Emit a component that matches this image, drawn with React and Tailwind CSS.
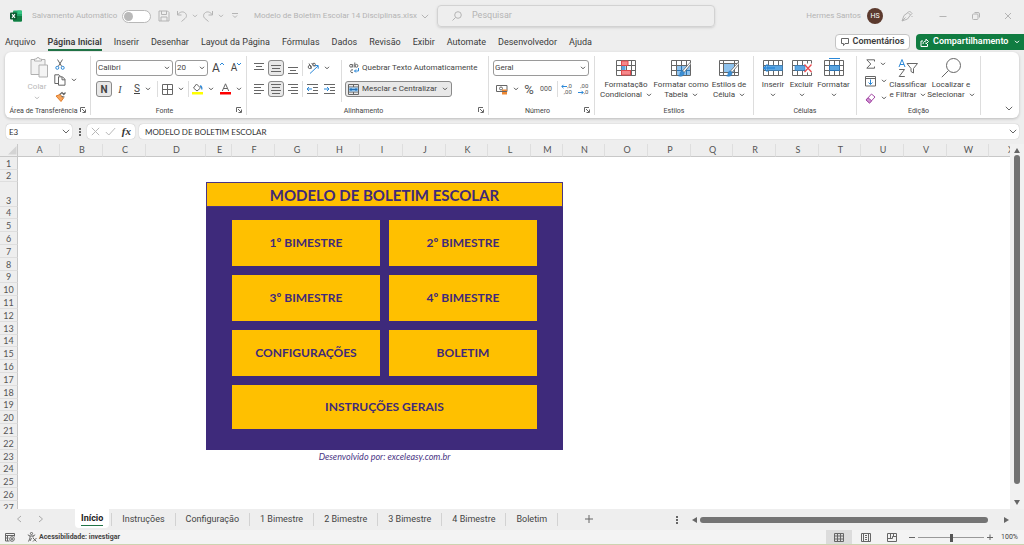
import React from "react";

function Svg({ w, h, children, className = "" }) {
  return (
    <svg width={w} height={h} viewBox={`0 0 ${w} ${h}`} fill="none" className={`shrink-0 ${className}`} aria-hidden="true">
      {children}
    </svg>
  );
}

function Chevron({ className = "text-[#555555]" }) {
  return (
    <Svg w={6} h={4} className={className}>
      <path d="M1 .8L3 2.8L5 .8" stroke="currentColor" />
    </Svg>
  );
}

function WideChevron({ className = "text-[#666666]" }) {
  return (
    <Svg w={8} h={5} className={className}>
      <path d="M.8 .8L4 4L7.2 .8" stroke="currentColor" />
    </Svg>
  );
}

const GRAY = "#666666";
const BLUE = "#2b88d8";

/* ---------- Title bar ---------- */

function TitleBar() {
  return (
    <header className="flex h-8 shrink-0 items-center text-[8px] text-[#b4b4b4]">
      <div className="flex w-[437px] shrink-0 items-center pl-2.5">
        <Svg w={12} h={12}>
          <rect x="3" y="0.5" width="9" height="11" rx="1" fill="#21a366" />
          <path d="M3 6h9v4.500a1 1 0 0 1-1 1H4a1 1 0 0 1-1-1z" fill="#107c41" />
          <path d="M7.500 .5H11a1 1 0 0 1 1 1V4H7.500z" fill="#33c481" />
          <rect x="0" y="2.500" width="7" height="7" rx="1" fill="#0b5a2f" />
          <path d="M2 4.200L5 7.900M5 4.200L2 7.900" stroke="#fff" strokeWidth="1.100" />
        </Svg>
        <label htmlFor="autosave" className="ml-2.5 w-[90px] whitespace-nowrap">Salvamento Automático</label>
        <span className="relative flex h-[13px] w-[29px] items-center">
          <input id="autosave" type="checkbox" role="switch" className="peer h-[13px] w-[29px] appearance-none rounded-full border border-[#b8b8b8] bg-white" />
          <span className="pointer-events-none absolute left-0.5 size-[9px] rounded-full bg-[#b9b9b9]" />
        </span>
        <button aria-label="Salvar" className="ml-[7px]">
          <Svg w={12} h={12}>
            <path d="M1 1h8.500L11 2.500V11H1zM3.500 1v3.500h5V1M3 11V7h6v4" stroke="#b4b4b4" />
          </Svg>
        </button>
        <button aria-label="Desfazer" className="ml-1.5 flex items-center gap-1">
          <Svg w={12} h={12}>
            <path d="M1.500 1v4h4M1.500 5C3 2.500 6 1 8.500 2.500C11 4 11 7 9 8.500L5.500 11.500" stroke="#b4b4b4" />
          </Svg>
          <Chevron className="text-[#b4b4b4]" />
        </button>
        <button aria-label="Refazer" className="ml-1 flex items-center gap-1">
          <Svg w={12} h={12}>
            <path d="M10.500 1v4h-4M10.500 5C9 2.500 6 1 3.500 2.500C1 4 1 7 3 8.500L6.500 11.500" stroke="#b4b4b4" />
          </Svg>
          <Chevron className="text-[#b4b4b4]" />
        </button>
        <button aria-label="Personalizar acesso rápido" className="ml-2">
          <Svg w={6} h={6}>
            <path d="M0 .5h6M1 2.500L3 4.500L5 2.500" stroke="#b4b4b4" />
          </Svg>
        </button>
        <button className="ml-4 flex items-center gap-1 whitespace-nowrap">
          Modelo de Boletim Escolar 14 Disciplinas.xlsx
          <WideChevron className="text-[#b4b4b4]" />
        </button>
      </div>
      <label className="flex h-[22px] min-w-0 flex-1 items-center gap-2.5 rounded border border-[#d2d2d2] px-3.5 shadow-sm">
        <Svg w={10} h={10}>
          <circle cx="6" cy="4" r="3.300" stroke="#b4b4b4" />
          <path d="M3.500 6.500L.5 9.500" stroke="#b4b4b4" />
        </Svg>
        <input aria-label="Pesquisar" placeholder="Pesquisar" className="min-w-0 flex-1 bg-transparent text-[9px] outline-none placeholder:text-[#b4b4b4]" />
      </label>
      <div className="flex w-[309px] shrink-0 items-center justify-end pr-3">
        <span>Hermes Santos</span>
        <span className="mr-[18px] ml-1.5 flex size-4 items-center justify-center rounded-full bg-[#5c3a2e] text-[7px] text-white">HS</span>
        <button aria-label="Caneta" className="mr-[26px]">
          <Svg w={12} h={12}>
            <path d="M1 11L3 5.500L7 2.500L9.500 5L6.500 9zM1 11l3.500-3.500M7 2.500l1.500-1.500L11 3.500L9.500 5M11 6v1" stroke="#b4b4b4" />
          </Svg>
        </button>
        <button aria-label="Minimizar" className="mr-[25px]">
          <Svg w={8} h={8}><path d="M.5 4.500h7" stroke="#b4b4b4" /></Svg>
        </button>
        <button aria-label="Restaurar" className="mr-6">
          <Svg w={8} h={8}>
            <rect x=".5" y="2" width="5.500" height="5.500" rx="1" stroke="#b4b4b4" />
            <path d="M2.500 .5H6A1.500 1.500 0 0 1 7.500 2V5.500" stroke="#b4b4b4" />
          </Svg>
        </button>
        <button aria-label="Fechar">
          <Svg w={8} h={8}><path d="M1 1l6 6M7 1L1 7" stroke="#b4b4b4" /></Svg>
        </button>
      </div>
    </header>
  );
}

/* ---------- Ribbon tabs ---------- */

const TABS = ["Arquivo", "Página Inicial", "Inserir", "Desenhar", "Layout da Página", "Fórmulas", "Dados", "Revisão", "Exibir", "Automate", "Desenvolvedor", "Ajuda"];

function RibbonTabs() {
  return (
    <nav className="flex h-5 shrink-0 items-center pl-[5px] text-[9px] text-[#3b3b3b]">
      <div className="flex flex-1 gap-3">
        {TABS.map((t) => (
          <button
            key={t}
            className={t === "Página Inicial"
              ? "border-b-2 border-[#217346] pt-0.5 leading-[13px] font-semibold whitespace-nowrap"
              : "border-b-2 border-transparent pt-0.5 leading-[13px] whitespace-nowrap"}
          >
            {t}
          </button>
        ))}
      </div>
      <button className="mr-1.5 flex h-4 w-[75px] items-center justify-center gap-1 rounded-sm border border-[#c4c4c4] bg-white font-semibold">
        <Svg w={8} h={8}><path d="M.5 .5h7v5H4L2.500 7.500V5.500H.5z" stroke={GRAY} /></Svg>
        Comentários
      </button>
      <button className="flex h-4 w-[108px] items-center gap-1 rounded-l-sm bg-[#107c41] pl-1 font-semibold text-white">
        <Svg w={9} h={9}>
          <path d="M3 3H1v5.500h6.500V6M3 6C3 4 4.500 3 6 3V1l2.500 2.500L6 6V4.500" stroke="#fff" />
        </Svg>
        <span className="flex-1 text-left">Compartilhamento</span>
        <Chevron className="mr-1 text-white" />
      </button>
    </nav>
  );
}

/* ---------- Ribbon ---------- */

function Launcher() {
  return (
    <button aria-label="Mais opções" className="absolute right-1 bottom-0.5">
      <Svg w={6} h={6}>
        <path d="M.5 5V.5H5M2 2l3 3M5.500 2.500v3h-3" stroke={GRAY} />
      </Svg>
    </button>
  );
}

function Group({ label, className, launcher, children }) {
  return (
    <section className={`relative flex shrink-0 flex-col border-r border-[#dddddd] ${className}`}>
      <div className="flex h-[51px] items-start">{children}</div>
      <div className={launcher
        ? "flex flex-1 items-end justify-center pr-2 text-[7px] leading-[8px] whitespace-nowrap text-[#444444]"
        : "flex flex-1 items-end justify-center text-[7px] leading-[8px] whitespace-nowrap text-[#444444]"}>{label}</div>
      {launcher && <Launcher />}
    </section>
  );
}

function IconButton({ label, active, chevron, className = "", children }) {
  return (
    <button
      aria-label={label}
      className={active
        ? "flex h-4 w-4 shrink-0 items-center justify-center rounded-[3px] border border-[#8a8a8a] bg-[#e8e8e8]"
        : `flex h-4 shrink-0 items-center justify-center gap-[5px] ${className}`}
    >
      {children}
      {chevron && <Chevron />}
    </button>
  );
}

function Lines({ widths, start = 0, align = "center" }) {
  return (
    <Svg w={10} h={11}>
      {widths.map((w, i) => {
        const x = align === "left" ? 0 : align === "right" ? 10 - w : (10 - w) / 2;
        const y = start + i * 3 + 0.5;
        return <path key={i} d={`M${x} ${y}h${w}`} stroke={GRAY} />;
      })}
    </Svg>
  );
}

function Indent({ right }) {
  return (
    <Svg w={11} h={11}>
      <path d="M0 .5h11M6 3.500h5M6 6.500h5M0 9.500h11" stroke={GRAY} />
      <path d={right ? "M0 5h5M3 3l2 2l-2 2" : "M5 5H0M2 3L0 5l2 2"} stroke={BLUE} />
    </Svg>
  );
}

function BigButton({ lines, icon, className = "" }) {
  return (
    <button className={`flex shrink-0 flex-col items-center text-[8px] leading-[10px] whitespace-nowrap text-[#444444] ${className}`}>
      <span className="flex h-6 items-center">{icon}</span>
      {lines.map((l, i) => (
        <span key={i} className="flex h-[10px] items-center gap-1">
          {l}
          {i === lines.length - 1 && <Chevron />}
        </span>
      ))}
    </button>
  );
}

function SelectBox({ label, value, className }) {
  return (
    <span className={`relative flex h-4 items-center ${className}`}>
      <select aria-label={label} defaultValue={value} className="h-4 w-full appearance-none rounded-[3px] border border-[#9a9a9a] bg-white pl-px text-[8px] text-[#444444]">
        <option>{value}</option>
      </select>
      <span className="pointer-events-none absolute right-[3px] flex"><Chevron /></span>
    </span>
  );
}

function GridIcon({ children }) {
  return (
    <Svg w={20} h={20}>
      <path d="M.5 2.500h19v15H.5zM.5 7.500h19M.5 12.500h19M5.500 2.500v15M10.500 2.500v15M15.500 2.500v15" stroke={GRAY} />
      {children}
    </Svg>
  );
}

function Brush() {
  return (
    <>
      <path d="M19.500 4L11.500 13l1.500 1.500L20 6z" fill="#fff" stroke={GRAY} strokeWidth=".8" />
      <path d="M11.500 13c-2 0-2.500 1.500-2.500 3c0 1-1 1.500-2 1.500c2 1.500 6.500 1 6-3z" fill="#3a8ed4" stroke="#2b75b5" strokeWidth=".6" />
    </>
  );
}

function Divider() {
  return <span className="h-4 w-px shrink-0 bg-[#dddddd]" />;
}

function Ribbon() {
  return (
    <div className="mr-[5px] ml-[5px] flex h-[66px] shrink-0 rounded-md bg-white pt-1 pb-[3px] shadow-[0_1px_3px_rgba(0,0,0,0.22)]">
      <Group label="Área de Transferência" className="w-[86px]" launcher>
        <button className="ml-5 flex w-[24px] flex-col items-center text-[8px] leading-[10px] text-[#b8b8b8]">
          <Svg w={20} h={22} className="mb-1 ml-1">
            <path d="M2 3.500h14v15H2z" fill="#f2f2f2" stroke="#b0b0b0" />
            <path d="M5.500 5V3H7.500a1.500 1.500 0 0 1 3 0H12.500V5z" fill="#fff" stroke="#b0b0b0" />
            <path d="M10 9h8.500v12H10z" fill="#f4f4f4" stroke="#b0b0b0" />
          </Svg>
          Colar
          <Chevron className="mt-1 text-[#b8b8b8]" />
        </button>
        <div className="ml-[3px] flex flex-col items-start">
          <IconButton label="Recortar" className="w-4">
            <Svg w={10} h={11}>
              <path d="M2.500 .5L6.800 7.500M7.500 .5L3.200 7.500" stroke={GRAY} />
              <circle cx="2.300" cy="8.800" r="1.500" stroke={BLUE} />
              <circle cx="7.700" cy="8.800" r="1.500" stroke={BLUE} />
            </Svg>
          </IconButton>
          <IconButton label="Copiar" chevron className="pl-0.5">
            <Svg w={12} h={12}>
              <path d="M4 9.500H.8V.8H5L6.500 2.300M4.500 2.800h4L11 5.300V11.200H4.500zM8 3v2.800h3" stroke={GRAY} />
            </Svg>
          </IconButton>
          <IconButton label="Pincel de formatação" className="w-4">
            <Svg w={11} h={11}>
              <path d="M1 5l5 5.500L8.500 7L5 3.500z" fill="#f6a55c" stroke="#e07b28" />
              <path d="M4.800 3.500L7 1.500L8.800 3.500L10.500 1.500M6.500 5.500L9.500 6" stroke={GRAY} strokeWidth="1.200" />
            </Svg>
          </IconButton>
        </div>
      </Group>

      <Group label="Fonte" className="w-[156px]" launcher>
        <div className="flex flex-col gap-[5px] pt-1 pl-[5px]">
          <div className="flex items-center">
            <SelectBox label="Fonte" value="Calibri" className="mr-0.5 w-[77px]" />
            <SelectBox label="Tamanho da fonte" value="20" className="w-[33px]" />
            <IconButton label="Aumentar fonte" className="ml-1 text-[12px] text-[#444444]">
              <span className="flex items-start leading-[12px]">A<Svg w={4} h={4}><path d="M0 3L2 1l2 2" stroke={BLUE} /></Svg></span>
            </IconButton>
            <IconButton label="Diminuir fonte" className="ml-[7px] text-[10px] text-[#444444]">
              <span className="flex items-start leading-[12px]">A<Svg w={4} h={4}><path d="M0 1L2 3l2-2" stroke={BLUE} /></Svg></span>
            </IconButton>
          </div>
          <div className="flex items-center text-[#444444]">
            <IconButton label="Negrito" active><b className="text-[10px]">N</b></IconButton>
            <IconButton label="Itálico" className="w-4"><i className="font-['Liberation_Serif',serif] text-[10px]">I</i></IconButton>
            <IconButton label="Sublinhado" chevron className="ml-1.5 gap-2"><u className="text-[10px] leading-[12px]">S</u></IconButton>
            <span className="mr-1 ml-1.5 flex"><Divider /></span>
            <IconButton label="Bordas" chevron>
              <Svg w={11} h={11}><path d="M.5 .5h10v10H.5zM5.500 .5v10M.5 5.500h10" stroke={GRAY} /></Svg>
            </IconButton>
            <span className="mr-[3px] ml-1 flex"><Divider /></span>
            <IconButton label="Cor de preenchimento" chevron>
              <Svg w={11} h={12}>
                <path d="M4.500 1L8.500 5L5 8L1.500 5z" stroke={GRAY} />
                <path d="M8 3c1.500 0 2 1.500 1.800 3.500" stroke={BLUE} strokeWidth="1.300" />
                <path d="M0 9h11v2.500H0z" fill="#ffff00" />
              </Svg>
            </IconButton>
            <IconButton label="Cor da fonte" chevron className="ml-1.5">
              <Svg w={11} h={12}>
                <path d="M2.300 8L5.500 .8L8.700 8M3.500 5.500h4" stroke={GRAY} />
                <path d="M0 9h11v2.500H0z" fill="#ff0000" />
              </Svg>
            </IconButton>
          </div>
        </div>
      </Group>

      <Group label="Alinhamento" className="w-[242px]" launcher>
        <div className="flex w-[94px] shrink-0 flex-col gap-[5px] pt-1 pl-1">
          <div className="flex items-center gap-px">
            <IconButton label="Alinhar acima" className="w-4"><Lines widths={[10, 6, 10]} /></IconButton>
            <IconButton label="Alinhar no meio" active><Lines widths={[10, 8, 10]} start={2} /></IconButton>
            <IconButton label="Alinhar embaixo" className="w-4"><Lines widths={[10, 6, 10]} start={4} /></IconButton>
            <Divider />
            <IconButton label="Orientação" chevron className="ml-[3px] gap-1">
              <Svg w={12} h={12}>
                <circle cx="2.800" cy="5" r="1.600" stroke={GRAY} />
                <path d="M4.500 6.500L2 1.500M4.500 1l3.500 3.500" stroke={GRAY} />
                <circle cx="7" cy="2.600" r="1.400" stroke={GRAY} />
                <path d="M3 11.500L11 4M8 3.500h3.200v3.200" stroke={BLUE} />
              </Svg>
            </IconButton>
          </div>
          <div className="flex items-center gap-px">
            <IconButton label="Alinhar à esquerda" className="w-4"><Lines widths={[10, 7, 10, 7]} align="left" /></IconButton>
            <IconButton label="Centralizar" active><Lines widths={[10, 8, 10, 8]} /></IconButton>
            <IconButton label="Alinhar à direita" className="w-4"><Lines widths={[10, 7, 10, 7]} align="right" /></IconButton>
            <Divider />
            <IconButton label="Diminuir recuo" className="w-4"><Indent /></IconButton>
            <IconButton label="Aumentar recuo" className="w-4"><Indent right /></IconButton>
          </div>
        </div>
        <div className="mt-1 flex h-[42px] shrink-0 flex-col gap-[5px] border-l border-[#dddddd] pl-[3px] text-[8px] whitespace-nowrap text-[#444444]">
          <button className="flex h-4 items-center gap-[3px] pl-1">
            <Svg w={10} h={12}>
              <circle cx="2" cy="3.800" r="1.400" stroke={GRAY} />
              <path d="M3.800 2v3.500M5.800 .5v5M4 8a1.500 1.500 0 1 0 0 2.500" stroke={GRAY} />
              <circle cx="7.500" cy="3.800" r="1.400" stroke={GRAY} />
              <path d="M9.500 6v3H5.500M7 7.500L5.500 9L7 10.500" stroke={BLUE} />
            </Svg>
            Quebrar Texto Automaticamente
          </button>
          <button className="flex h-4 w-[107px] items-center gap-[3px] rounded-[3px] border border-[#8a8a8a] bg-[#e8e8e8] pl-0.5">
            <Svg w={11} h={11}>
              <path d="M.5 .5h10v10H.5zM.5 3h10M.5 8h10M5.500 .5V3M5.500 8v2.500" stroke={GRAY} />
              <path d="M1 3.500h9v4H1z" fill="#8fc3ee" />
              <path d="M2 5.500h7M3.500 4L2 5.500L3.500 7M7.500 4L9 5.500L7.500 7" stroke="#1f6fb8" />
            </Svg>
            <span className="flex-1 text-left">Mesclar e Centralizar</span>
            <span className="mr-[3px] flex"><Chevron /></span>
          </button>
        </div>
      </Group>

      <Group label="Número" className="w-[106px]" launcher>
        <div className="flex flex-col gap-[5px] pt-1 pl-1">
          <SelectBox label="Formato de número" value="Geral" className="w-24" />
          <div className="flex items-center text-[#555555]">
            <IconButton label="Formato de contabilização" chevron className="ml-[3px]">
              <Svg w={12} h={11}>
                <path d="M.5 1.500h10.500v6H.5z" stroke={GRAY} />
                <circle cx="5" cy="4.500" r="1.500" stroke={GRAY} />
                <path d="M6 5.500h5v1.500H6zM6 8h5v2.500H6z" fill="#ed8733" />
              </Svg>
            </IconButton>
            <IconButton label="Porcentagem" className="ml-1 w-3 text-[13px] leading-none">%</IconButton>
            <IconButton label="Separador de milhares" className="w-[22px] text-[7px]">000</IconButton>
            <Divider />
            <IconButton label="Aumentar casas decimais" className="w-[17px]">
              <span className="flex flex-col text-right text-[6px] leading-[6px]">
                <span className="flex items-center"><Svg w={6} h={5}><path d="M6 2.500H.8M2.500 .8L.8 2.500L2.500 4.200" stroke={BLUE} /></Svg>,0</span>
                <span>,00</span>
              </span>
            </IconButton>
            <IconButton label="Diminuir casas decimais" className="w-4">
              <span className="flex flex-col text-right text-[6px] leading-[6px]">
                <span>,00</span>
                <span className="flex items-center"><Svg w={6} h={5}><path d="M0 2.500h5.200M3.500 .8l1.700 1.700L3.500 4.200" stroke={BLUE} /></Svg>,0</span>
              </span>
            </IconButton>
          </div>
        </div>
      </Group>

      <Group label="Estilos" className="w-[159px]">
        <BigButton
          className="ml-[5px] w-[52px]"
          lines={["Formatação", "Condicional"]}
          icon={
            <GridIcon>
              <path d="M5.500 3h6.500v4.500H5.500zM5.500 12.500h9V17h-9z" fill="#f4888b" stroke="#e0484d" />
              <path d="M5.500 8h4v4h-4z" fill="#5ba6e2" />
            </GridIcon>
          }
        />
        <BigButton
          className="w-[58px]"
          lines={["Formatar como", "Tabela"]}
          icon={
            <GridIcon>
              <path d="M6 8h13v9H6z" fill="#8fc3ee" />
              <path d="M6 12.500h13M10.500 8v9M15.500 8v9" stroke="#2b75b5" />
              <Brush />
            </GridIcon>
          }
        />
        <BigButton
          className="w-[38px]"
          lines={["Estilos de", "Célula"]}
          icon={
            <Svg w={20} h={20}>
              <path d="M.5 2.500h19v15H.5zM.5 5.500h19M.5 14.500h19M4.500 2.500v15M15.500 2.500v15" stroke={GRAY} />
              <path d="M5 6h10v8H5z" fill="#8fc3ee" />
              <Brush />
            </Svg>
          }
        />
      </Group>

      <Group label="Células" className="w-[103px]">
        <BigButton
          className="ml-[5px] w-7"
          lines={["Inserir", ""]}
          icon={
            <GridIcon>
              <path d="M4 7.500h15.500v5H4z" fill="#5ba6e2" stroke="#2b75b5" strokeWidth=".6" />
              <path d="M12 10H.8M4.500 6.500L.8 10l3.700 3.500" stroke={BLUE} strokeWidth="1.300" />
            </GridIcon>
          }
        />
        <BigButton
          className="w-[29px]"
          lines={["Excluir", ""]}
          icon={
            <GridIcon>
              <path d="M13 5.500h7v9h-7z" fill="#fff" />
              <path d="M3 7.500h10v5H3z" fill="#5ba6e2" stroke="#2b75b5" strokeWidth=".6" />
              <path d="M12.500 6.500l7 7.500M19.500 6.500l-7 7.500" stroke="#e8484d" strokeWidth="1.300" />
            </GridIcon>
          }
        />
        <BigButton
          className="w-[35px]"
          lines={["Formatar", ""]}
          icon={
            <GridIcon>
              <path d="M5.500 7.500h10v5h-10z" fill="#5ba6e2" stroke="#2b75b5" />
              <path d="M5 .5h11" stroke={BLUE} />
            </GridIcon>
          }
        />
      </Group>

      <Group label="Edição" className="w-[124px]">
        <div className="ml-2 flex w-[21px] shrink-0 flex-col gap-px">
          <IconButton label="AutoSoma" chevron>
            <Svg w={9} h={10}><path d="M8.500 2.500V.8H.8L4.800 5L.8 9.200H8.500V7.500" stroke={GRAY} /></Svg>
          </IconButton>
          <IconButton label="Preencher" chevron className="gap-1">
            <Svg w={11} h={11}>
              <path d="M.5 .5h10v9.500H.5zM.5 2.500h10" stroke={GRAY} />
              <path d="M5.500 3.500v5M3.500 6.500l2 2l2-2" stroke={BLUE} />
            </Svg>
          </IconButton>
          <IconButton label="Limpar" chevron className="gap-1">
            <Svg w={11} h={11}>
              <path d="M1 7L6.500 1L10 4L4.500 10z" fill="#fff" stroke="#a349a4" />
              <path d="M1 7L3 4.800L6.800 7.800L4.500 10z" fill="#cf8fd2" stroke="#a349a4" />
            </Svg>
          </IconButton>
        </div>
        <BigButton
          className="ml-[3px] w-[38px]"
          lines={["Classificar", "e Filtrar"]}
          icon={
            <Svg w={20} h={20}>
              <path d="M1 9L4 1.500L7 9M2 6.500h4" stroke={BLUE} />
              <path d="M1.200 11.500H6.500L1.200 18.500H6.800" stroke={GRAY} />
              <path d="M9 5.500h10.500L15.500 10.500V15L13 13.500V10.500z" stroke={GRAY} />
            </Svg>
          }
        />
        <BigButton
          className="w-[48px]"
          lines={["Localizar e", "Selecionar"]}
          icon={
            <Svg w={20} h={20}>
              <circle cx="12.500" cy="7.500" r="7" stroke={GRAY} />
              <path d="M7.500 12.500L.8 19.200" stroke={GRAY} />
            </Svg>
          }
        />
      </Group>

      <div className="flex flex-1 items-end justify-end pr-1.5 pb-1">
        <button aria-label="Recolher faixa de opções"><WideChevron /></button>
      </div>
    </div>
  );
}

/* ---------- Formula bar ---------- */

function FormulaBar() {
  return (
    <div className="mt-1.5 mr-[5px] ml-1.5 flex h-[15px] shrink-0 items-stretch font-[Lato,sans-serif] text-[8px] text-[#333333]">
      <label className="flex w-[66px] items-center rounded-sm bg-white pr-0.5 pl-[3px] shadow-[0_0_1px_rgba(0,0,0,0.35)]">
        <input aria-label="Caixa de nome" defaultValue="E3" className="w-0 min-w-0 flex-1 outline-none" />
        <WideChevron />
      </label>
      <span className="flex w-[15px] items-center justify-center">
        <Svg w={2} h={8}><path d="M0 0h2v2H0zM0 3h2v2H0zM0 6h2v2H0z" fill="#666666" /></Svg>
      </span>
      <div className="flex w-12 items-center justify-between rounded-sm bg-white px-1 shadow-[0_0_1px_rgba(0,0,0,0.35)]">
        <button aria-label="Cancelar"><Svg w={9} h={9}><path d="M.8 .8l7.400 7.400M8.200 .8L.8 8.200" stroke="#b8b8b8" /></Svg></button>
        <button aria-label="Inserir"><Svg w={11} h={9}><path d="M.8 5l3 3L10.200 1" stroke="#b8b8b8" /></Svg></button>
        <button aria-label="Inserir função" className="font-['Liberation_Serif',serif] text-[11px] leading-none font-bold italic">fx</button>
      </div>
      <label className="ml-1 flex min-w-0 flex-1 items-center rounded-sm bg-white pr-0.5 pl-1.5 shadow-[0_0_1px_rgba(0,0,0,0.35)]">
        <input aria-label="Barra de fórmulas" defaultValue="MODELO DE BOLETIM ESCOLAR" className="min-w-0 flex-1 outline-none" />
        <WideChevron />
      </label>
    </div>
  );
}

/* ---------- Sheet ---------- */

const COLUMNS = [
  ["A", 42], ["B", 43], ["C", 43], ["D", 60], ["E", 26], ["F", 43], ["G", 43], ["H", 42],
  ["I", 43], ["J", 43], ["K", 42], ["L", 43], ["M", 32], ["N", 42], ["O", 43], ["P", 43],
  ["Q", 42], ["R", 43], ["S", 43], ["T", 42], ["U", 43], ["V", 43], ["W", 42], ["X", 43],
];

const ROWS = Array.from({ length: 27 }, (_, i) => {
  const n = i + 1;
  if (n === 2) return [n, 12];
  if (n === 3) return [n, 25];
  if (n > 3 && (n - 4) % 5 === 0) return [n, 12];
  return [n, 13];
});

const SHEET_WIDTH = 18 + COLUMNS.reduce((sum, c) => sum + c[1], 0);

const MENU = ["1º BIMESTRE", "2º BIMESTRE", "3º BIMESTRE", "4º BIMESTRE", "CONFIGURAÇÕES", "BOLETIM"];

function MenuPanel() {
  const item = "flex items-center justify-center bg-[#ffc000] text-[12px] font-bold text-[#3f2a7a]";
  return (
    <div className="grid grid-cols-2 gap-[9px] px-[26px] pt-[13px]">
      {MENU.map((m) => (
        <button key={m} className={`h-[46px] ${item}`}>{m}</button>
      ))}
      <button className={`col-span-2 h-11 ${item}`}>INSTRUÇÕES GERAIS</button>
    </div>
  );
}

function Sheet() {
  return (
    <div className="mt-[5px] flex min-h-0 flex-1">
      <div className="min-w-0 flex-1 overflow-hidden bg-white">
        <table className="table-fixed border-separate border-spacing-0 font-[Lato,sans-serif] text-[9px] leading-[10px]" style={{ width: SHEET_WIDTH }}>
          <colgroup>
            <col style={{ width: 18 }} />
            {COLUMNS.map(([name, w]) => <col key={name} style={{ width: w }} />)}
          </colgroup>
          <thead>
            <tr style={{ height: 13 }}>
              <th className="border-r border-b border-[#c8c8c8] bg-[#eeeeee] p-0" aria-label="Selecionar tudo">
                <Svg w={9} h={9} className="ml-auto"><path d="M8.500 0v8.500H0z" fill="#d4d4d4" /></Svg>
              </th>
              {COLUMNS.map(([name]) => (
                <th key={name} scope="col" className="border-r border-b border-r-[#dedede] border-b-[#c8c8c8] bg-[#eeeeee] p-0 pl-0.5 font-normal text-[#555555]">{name}</th>
              ))}
            </tr>
          </thead>
          <tbody>
            {ROWS.map(([n, h]) => (
              <tr key={n} style={{ height: h }}>
                <th scope="row" className="border-r border-b border-r-[#c8c8c8] border-b-[#dedede] bg-[#eeeeee] p-0 align-bottom font-normal text-[#555555]">{n}</th>
                <td colSpan={4} className="p-0" />
                {n === 3 && (
                  <td colSpan={9} className="border border-[#4a3584] bg-[#ffc000] p-0 text-center text-[15px] leading-[18px] font-bold text-[#3f2a7a]">
                    MODELO DE BOLETIM ESCOLAR
                  </td>
                )}
                {n === 4 && (
                  <td colSpan={9} rowSpan={19} className="bg-[#3e2a7b] p-0 align-top"><MenuPanel /></td>
                )}
                {n === 23 && (
                  <td colSpan={9} className="p-0 text-center text-[#4a3584] italic">Desenvolvido por: exceleasy.com.br</td>
                )}
                {(n < 3 || n > 23) && <td colSpan={9} className="p-0" />}
                <td colSpan={11} className="p-0" />
              </tr>
            ))}
          </tbody>
        </table>
      </div>
      <div className="flex w-3.5 shrink-0 flex-col items-center bg-[#f1f1f1] pt-1">
        <Svg w={6} h={5}><path d="M3 0l3 5H0z" fill="#666666" /></Svg>
        <div className="mt-0.5 mb-4 w-1.5 flex-1 rounded-full bg-[#737373]" />
        <Svg w={6} h={5} className="mb-1"><path d="M0 0h6L3 5z" fill="#666666" /></Svg>
      </div>
    </div>
  );
}

/* ---------- Sheet tabs and status bar ---------- */

const SHEETS = ["Instruções", "Configuração", "1 Bimestre", "2 Bimestre", "3 Bimestre", "4 Bimestre", "Boletim"];

function SheetTabs() {
  return (
    <div className="flex h-[21px] shrink-0 bg-[#eeeeee] text-[9px] text-[#444444]">
      <div className="flex w-[676px] shrink-0 items-start">
        <button aria-label="Planilha anterior" className="mt-1.5 ml-4">
          <Svg w={6} h={8}><path d="M5 1L1.500 4L5 7" stroke="#aaaaaa" /></Svg>
        </button>
        <button aria-label="Próxima planilha" className="mt-1.5 ml-4">
          <Svg w={6} h={8}><path d="M1 1l3.500 3L1 7" stroke="#aaaaaa" /></Svg>
        </button>
        <button className="ml-[31px] h-[19px] rounded-b-sm bg-white px-1.5 font-bold text-[#222222]">
          <span className="block border-b border-[#217346] leading-[14px]">Início</span>
        </button>
        <div className="mt-1 flex h-[13px] items-center pl-0.5">
          {SHEETS.map((s) => (
            <button key={s} className="h-[13px] border-l border-[#d2d2d2] px-2.5 whitespace-nowrap">{s}</button>
          ))}
          <span className="h-[13px] w-px bg-[#d2d2d2]" />
        </div>
        <button aria-label="Nova planilha" className="mt-1.5 ml-[27px]">
          <Svg w={8} h={8}><path d="M4 0v8M0 4h8" stroke={GRAY} /></Svg>
        </button>
      </div>
      <div className="flex flex-1 items-center pr-[15px]">
        <Svg w={2} h={8}><path d="M0 0h2v2H0zM0 3h2v2H0zM0 6h2v2H0z" fill="#666666" /></Svg>
        <Svg w={5} h={6} className="ml-3.5"><path d="M5 0v6L0 3z" fill="#666666" /></Svg>
        <div className="mr-4 ml-[3px] h-1.5 flex-1 rounded-full bg-[#737373]" />
        <Svg w={5} h={6}><path d="M0 0l5 3l-5 3z" fill="#666666" /></Svg>
      </div>
    </div>
  );
}

function StatusBar() {
  return (
    <footer className="flex h-[15px] shrink-0 items-center border-b border-[#cdd3b0] bg-[#f3f3f3] pl-[5px] text-[7px] text-[#444444]">
      <button aria-label="Gravar macro">
        <Svg w={10} h={9}>
          <path d="M.5 .5h9v3M.5 .5v7.500h4M.5 2.500h9M2.500 2.500V8M.5 5h3" stroke={GRAY} />
          <circle cx="7" cy="6" r="2.300" stroke={GRAY} />
          <circle cx="7" cy="6" r="1" fill={GRAY} />
        </Svg>
      </button>
      <button className="ml-3 flex items-center gap-0.5 font-bold">
        <Svg w={10} h={10}>
          <circle cx="4.500" cy="1.500" r="1.100" stroke={GRAY} />
          <path d="M.8 2.800L3 4v2L1.500 9.500M8.200 2.800L6 4v1.500M3 4h3M3 9l1.500-3M6 6l3.500 3.500M9.500 6L6 9.500" stroke={GRAY} />
        </Svg>
        Acessibilidade: investigar
      </button>
      <div className="flex flex-1 items-center justify-end self-stretch pr-1.5">
        <button aria-label="Normal" className="flex w-[26px] items-center justify-center self-stretch bg-[#dcdcdc]">
          <Svg w={10} h={9}><path d="M.5 .5h9v8h-9zM.5 3h9M.5 6h9M3.500 .5v8M6.500 .5v8" stroke={GRAY} /></Svg>
        </button>
        <button aria-label="Layout da página" className="flex w-[27px] justify-center">
          <Svg w={10} h={9}><path d="M.5 .5h9v8h-9zM2.500 .5v8M7.500 .5v8M4 2.500h2M4 4.500h2M4 6.500h2" stroke={GRAY} /></Svg>
        </button>
        <button aria-label="Visualização da quebra de página" className="flex w-[26px] justify-center">
          <Svg w={10} h={9}><path d="M.5 .5h9v8h-9zM3.500 .5v5M6.500 .5v3M.5 5.500h5V3.500h4" stroke={GRAY} /></Svg>
        </button>
        <button aria-label="Diminuir zoom" className="ml-1"><Svg w={6} h={6}><path d="M0 3.500h6" stroke={GRAY} /></Svg></button>
        <input
          type="range"
          aria-label="Zoom"
          min="0"
          max="100"
          defaultValue="50"
          className="mx-[3px] h-2 w-[66px] appearance-none bg-transparent [&::-webkit-slider-runnable-track]:h-px [&::-webkit-slider-runnable-track]:bg-[#9a9a9a] [&::-webkit-slider-thumb]:-mt-[3px] [&::-webkit-slider-thumb]:h-2 [&::-webkit-slider-thumb]:w-[3px] [&::-webkit-slider-thumb]:appearance-none [&::-webkit-slider-thumb]:bg-[#555555]"
        />
        <button aria-label="Aumentar zoom"><Svg w={6} h={6}><path d="M0 3.500h6M3 .5v6" stroke={GRAY} /></Svg></button>
        <span className="ml-2">100%</span>
      </div>
    </footer>
  );
}

export default function App() {
  return (
    <div className="flex h-screen flex-col overflow-hidden bg-[#eeeeee] font-[Roboto,'Noto_Sans',sans-serif]">
      <TitleBar />
      <RibbonTabs />
      <Ribbon />
      <FormulaBar />
      <Sheet />
      <SheetTabs />
      <StatusBar />
    </div>
  );
}
